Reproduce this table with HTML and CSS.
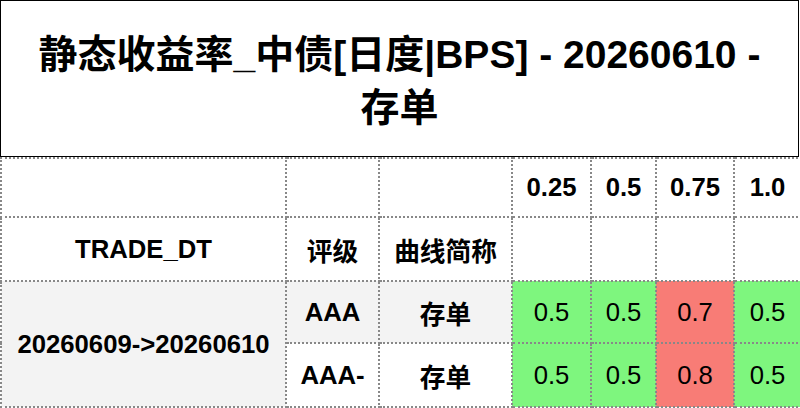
FILE: index.html
```html
<!DOCTYPE html>
<html lang="zh-CN">
<head>
<meta charset="utf-8">
<title>静态收益率_中债</title>
<link rel="stylesheet" href="styles.css">
</head>
<body>
<div class="title">静态收益率_中债[日度|BPS] - 20260610 - 存单</div>
<table class="grid">
  <colgroup>
    <col class="c-date"><col class="c-rate"><col class="c-curve">
    <col class="c-t1"><col class="c-t2"><col class="c-t3"><col class="c-t4">
  </colgroup>
  <thead>
    <tr class="h1">
      <th></th><th></th><th></th>
      <th>0.25</th><th>0.5</th><th>0.75</th><th>1.0</th>
    </tr>
    <tr class="h2">
      <th>TRADE_DT</th><th>评级</th><th>曲线简称</th>
      <th></th><th></th><th></th><th></th>
    </tr>
  </thead>
  <tbody>
    <tr class="r1 odd">
      <th rowspan="2" class="date">20260609-&gt;20260610</th>
      <th>AAA</th><th>存单</th>
      <td class="up">0.5</td><td class="up">0.5</td><td class="down">0.7</td><td class="up">0.5</td>
    </tr>
    <tr class="r2">
      <th>AAA-</th><th>存单</th>
      <td class="up">0.5</td><td class="up">0.5</td><td class="down">0.8</td><td class="up">0.5</td>
    </tr>
  </tbody>
</table>
</body>
</html>
```
FILE: styles.css
```css
html, body {
  margin: 0;
  padding: 0;
  background: #ffffff;
}
body {
  font-family: "Liberation Sans", Arial, "Noto Sans CJK SC", sans-serif;
  color: #000;
}
.title {
  box-sizing: border-box;
  width: 799px;
  height: 157px;
  border: 1px solid #000;
  padding: 27px 20px 0;
  text-align: center;
  font-weight: bold;
  font-size: 39px;
  line-height: 53px;
}
.grid {
  width: 800px;
  table-layout: fixed;
  border-collapse: collapse;
  font-size: 25.7px;
}
.c-date { width: 285px; }
.c-rate { width: 93px; }
.c-curve { width: 133px; }
.c-t1 { width: 79px; }
.c-t2 { width: 65px; }
.c-t3 { width: 78px; }
.c-t4 { width: 67px; }
.grid th, .grid td {
  border: 2px dotted #888;
  padding: 0;
  text-align: center;
  vertical-align: middle;
}
.grid th { font-weight: bold; }
.grid td { font-weight: normal; }
.h1 { height: 59px; }
.h2 { height: 64px; }
.r1 { height: 62px; }
.r2 { height: 64px; }
.odd th { background: #f3f3f3; }
.grid .up { background: #7ef67e; }
.grid .down { background: #f87c76; }
```
